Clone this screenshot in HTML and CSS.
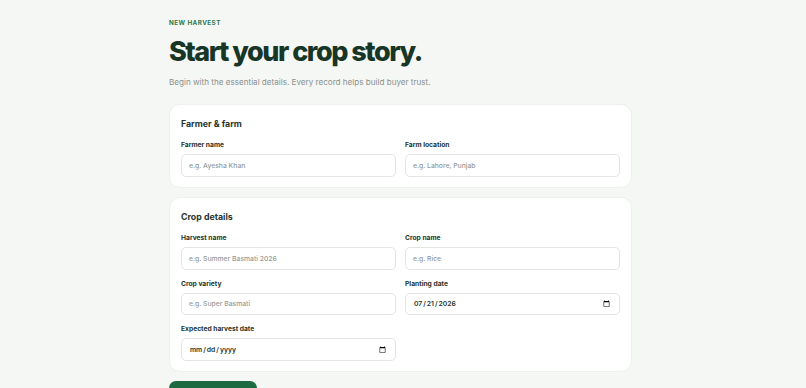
FILE: index.html
```html
<!DOCTYPE html>
<html lang="en">
<head>
<meta charset="utf-8">
<title>New harvest</title>
<link rel="stylesheet" href="styles.css">
</head>
<body>
<main class="page">
  <header class="intro">
    <p class="eyebrow">NEW HARVEST</p>
    <h1 class="title">Start your crop story.</h1>
    <p class="lead">Begin with the essential details. Every record helps build buyer trust.</p>
  </header>

  <section class="card">
    <h2 class="card-title">Farmer &amp; farm</h2>
    <div class="grid">
      <label class="field">
        <span class="label">Farmer name</span>
        <input class="input" type="text" placeholder="e.g. Ayesha Khan">
      </label>
      <label class="field">
        <span class="label">Farm location</span>
        <input class="input" type="text" placeholder="e.g. Lahore, Punjab">
      </label>
    </div>
  </section>

  <section class="card">
    <h2 class="card-title">Crop details</h2>
    <div class="grid">
      <label class="field">
        <span class="label">Harvest name</span>
        <input class="input" type="text" placeholder="e.g. Summer Basmati 2026">
      </label>
      <label class="field">
        <span class="label">Crop name</span>
        <input class="input" type="text" placeholder="e.g. Rice">
      </label>
      <label class="field">
        <span class="label">Crop variety</span>
        <input class="input" type="text" placeholder="e.g. Super Basmati">
      </label>
      <label class="field">
        <span class="label">Planting date</span>
        <input class="input date" type="date" value="2026-07-21">
      </label>
      <label class="field">
        <span class="label">Expected harvest date</span>
        <input class="input date" type="date">
      </label>
    </div>
  </section>

  <div class="actions">
    <button class="btn" type="button">Create harvest</button>
  </div>
</main>
<script src="script.js"></script>
</body>
</html>
```
FILE: styles.css
```css
html, body {
  margin: 0;
  padding: 0;
  background: #f5f7f5;
}
body {
  font-family: Inter, "Noto Sans", sans-serif;
  color: #1f2f27;
  padding-right: 5px;
}
.page {
  width: 463px;
  margin: 0 auto;
  padding: 89px 0 60px;
  display: flex;
  flex-direction: column;
  gap: 9px;
}
.intro {
  display: flex;
  flex-direction: column;
  margin-bottom: 7px;
}
.eyebrow {
  margin: 0;
  font-size: 6.3px;
  line-height: 7px;
  font-weight: 700;
  letter-spacing: 0.07em;
  color: #2e7a4d;
}
.title {
  margin: 7px 0 0;
  font-size: 27px;
  line-height: 36px;
  font-weight: 800;
  letter-spacing: -0.055em;
  color: #183626;
}
.lead {
  margin: 6px 0 0;
  font-size: 8.1px;
  line-height: 12px;
  color: #8a918c;
}
.card {
  background: #ffffff;
  border: 1px solid #edf0ed;
  border-radius: 11px;
  padding: 13px 11px 10.5px;
}
.card-title {
  margin: 0 0 11px;
  font-size: 8.8px;
  line-height: 12px;
  font-weight: 700;
  color: #27352e;
}
.grid {
  display: grid;
  grid-template-columns: 1fr 1fr;
  column-gap: 9px;
  row-gap: 10px;
}
.field {
  display: flex;
  flex-direction: column;
  gap: 4px;
}
.label {
  font-size: 6.7px;
  line-height: 9px;
  font-weight: 700;
  color: #26332c;
}
.input {
  box-sizing: border-box;
  height: 22.5px;
  width: 100%;
  margin: 0;
  padding: 0 7px;
  border: 1px solid #e2e6e3;
  border-radius: 5px;
  background: #ffffff;
  font-family: Inter, "Noto Sans", sans-serif;
  font-size: 6.8px;
  font-weight: 500;
  color: #26332c;
  outline: none;
}
.input::placeholder {
  color: #959b97;
}
.date {
  font-weight: 600;
  color: #26332c;
}
.actions {
  display: flex;
}
.btn {
  width: 88px;
  height: 30px;
  border: none;
  border-radius: 7px;
  background: #1d6a40;
  color: #ffffff;
  font-family: Inter, "Noto Sans", sans-serif;
  font-size: 8px;
  font-weight: 700;
}
```
FILE: script.js
```js
window.scrollTo(0, 69);
```
